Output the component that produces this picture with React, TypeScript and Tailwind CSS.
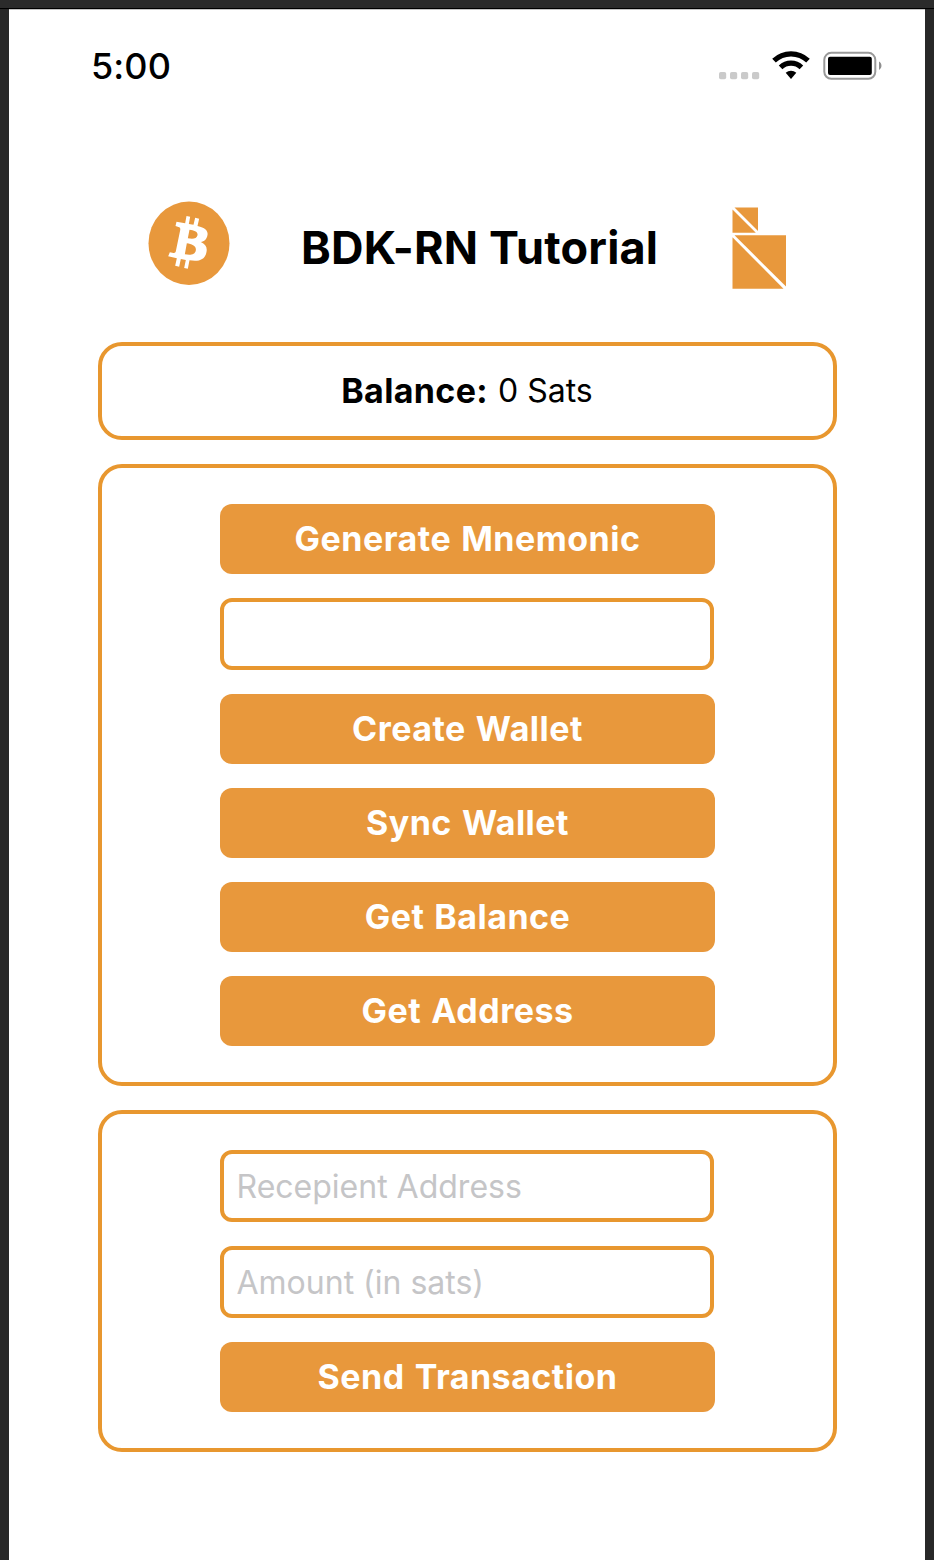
import type { ReactNode } from "react";

function StatusBar() {
  return (
    <div className="flex h-[112px] shrink-0 items-center border-t border-[#c4c4c4] pr-[42px] pl-[82px]">
      <span className="grow text-[36px] leading-[44px] font-medium tracking-[0.1px]">5:00</span>
      <svg className="h-[40px] w-[170px]" viewBox="0 0 170 40">
        <g fill="#cacaca">
          <rect x="6" y="26" width="7.2" height="7.2" rx="1.8" />
          <rect x="17" y="26" width="7.2" height="7.2" rx="1.8" />
          <rect x="28" y="26" width="7.2" height="7.2" rx="1.8" />
          <rect x="39" y="26" width="7.2" height="7.2" rx="1.8" />
        </g>
        <g fill="none" stroke="#000" strokeWidth="5.2">
          <path d="M61 14.6A24.6 24.6 0 0 1 95 14.6" />
          <path d="M67.6 21.3A15 15 0 0 1 88.4 21.3" />
        </g>
        <path d="M72.7 26.8A8 8 0 0 1 83.3 26.8L78 33.1Z" fill="#000" />
        <rect x="111.3" y="6.8" width="51" height="26" rx="7" fill="none" stroke="#999" strokeWidth="2" />
        <rect x="115" y="10.8" width="43.8" height="18.2" rx="2" fill="#000" />
        <path d="M166 15.6C169.3 17.3 169.3 22.3 166 24Z" fill="#8f8f8f" />
      </svg>
    </div>
  );
}

function BitcoinLogo() {
  return (
    <svg className="h-[84px] w-[82px]" viewBox="0 0 82 84">
      <ellipse cx="41" cy="42.3" rx="40.5" ry="41.7" fill="#e8983c" />
      <path
        transform="translate(16.5 11) scale(0.3333)"
        fill="#fff"
        fillRule="evenodd"
        d="M36 29L62 34L66 12L77 14L73 36L87 38L92 17L104 20L99 42C124 48 131 57 129 69C127 82 119 89 109 90C123 96 129 106 126 120C122 142 106 150 75 145L70 170L59 168L64 144L49 141L44 164L32 161L37 139L11 133L16 121L27 123C31 124 33 121 34 118L47 55C48 49 47 46 42 45L33 42ZM75 53L70 79C84 82 97 81 99 70C101 58 89 55 75 53ZM67 94L61 127C77 130 92 129 94 115C96 101 82 97 67 94Z"
      />
    </svg>
  );
}

function BdkLogo() {
  return (
    <svg className="h-[84px] w-[56px]" viewBox="0 0 56 84" fill="#e8983c">
      <path d="M3.5 1.5H27V25Z" />
      <path d="M1.5 3.5V26.8H24.8Z" />
      <path d="M3.5 29.3H55V80.5Z" />
      <path d="M1.5 31.3V82.8H52.5Z" />
    </svg>
  );
}

function Card({ className, children }: { className: string; children?: ReactNode }) {
  return (
    <section className={`flex w-[739px] flex-col items-center rounded-[24px] border-4 border-[#e8972f] ${className}`}>
      {children}
    </section>
  );
}

function Button({ children }: { children: string }) {
  return (
    <button className="h-[70px] w-[495px] rounded-[12px] bg-[#e8983c] pb-px text-[34px] leading-[69px] font-bold tracking-[0.48px] text-white [word-spacing:1.5px]">
      {children}
    </button>
  );
}

function Field({ placeholder }: { placeholder?: string }) {
  return (
    <input
      placeholder={placeholder}
      className="mr-px h-[72px] w-[494px] rounded-[12px] border-4 border-[#e8972f] px-[12.5px] text-[32px] placeholder:text-[#c5c5c7]"
    />
  );
}

export default function App() {
  return (
    <div className="h-[1560px] w-[934px] overflow-hidden bg-[#2b2b2b] pt-[8px] font-['Inter',sans-serif] text-black">
      <div className="border-t border-black">
        <div className="flex h-[1551px] flex-col border-x-[9px] border-[#282828] bg-white">
          <StatusBar />
          <header className="flex h-[221px] shrink-0 items-start pl-[139px]">
            <div className="mt-[80px]">
              <BitcoinLogo />
            </div>
            <h1 className="mt-[99px] ml-[71px] w-[360px] text-[45px] leading-[56px] font-bold tracking-[0.2px] whitespace-nowrap">
              BDK-RN Tutorial
            </h1>
            <div className="mt-[85px] ml-[70px]">
              <BdkLogo />
            </div>
          </header>
          <main className="flex flex-col items-center gap-6 pl-[1px]">
            <Card className="h-[98px] justify-center">
              <p className="flex items-baseline gap-[10px] pr-px pb-[2px] text-[34px]">
                <span className="font-bold tracking-[0.35px]">Balance:</span>
                <span className="-translate-y-px text-[32px]">0 Sats</span>
              </p>
            </Card>
            <Card className="h-[622px] gap-6 pt-[36px]">
              <Button>Generate Mnemonic</Button>
              <Field />
              <Button>Create Wallet</Button>
              <Button>Sync Wallet</Button>
              <Button>Get Balance</Button>
              <Button>Get Address</Button>
            </Card>
            <Card className="h-[342px] gap-6 pt-[36px]">
              <Field placeholder="Recepient Address" />
              <Field placeholder="Amount (in sats)" />
              <Button>Send Transaction</Button>
            </Card>
          </main>
        </div>
      </div>
    </div>
  );
}
